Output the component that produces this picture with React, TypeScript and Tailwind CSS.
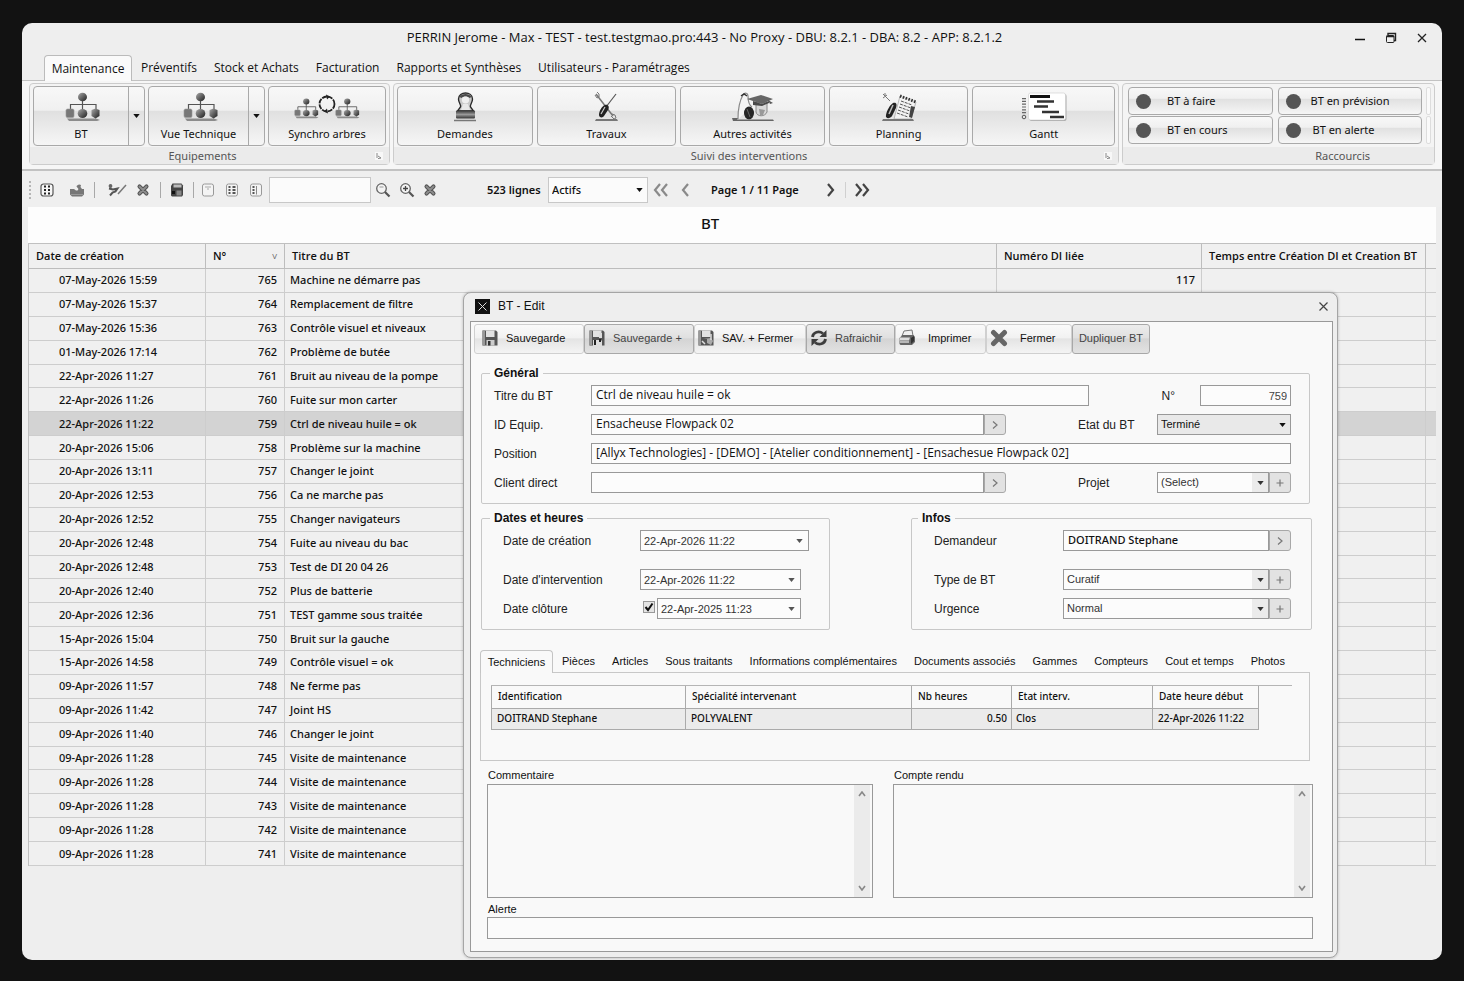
import React from "react";

type IconProps = { className?: string };

function Caret({ className = "" }: IconProps) {
  return (
    <svg viewBox="0 0 8 5" className={`h-[4px] w-[7px] ${className}`} aria-hidden="true">
      <path d="M0 0h8L4 5z" fill="currentColor" />
    </svg>
  );
}

function Launcher() {
  return (
    <svg viewBox="0 0 8 8" className="h-2 w-2 bg-[#f8f8f8]" aria-hidden="true">
      <path d="M2 1v5M3 4l3 2-3 .6" stroke="#888" fill="none" />
    </svg>
  );
}

function OrgShapes({ id }: { id: string }) {
  return (
    <>
      <defs>
        <linearGradient id={id} x1="0" y1="0" x2="1" y2="1">
          <stop offset="0" stopColor="#aaa" />
          <stop offset="1" stopColor="#1c1c1c" />
        </linearGradient>
      </defs>
      <path d="M2 26.500h29l4 1.500-3 1H4z" fill="#8c8c8c" />
      <path d="M17.500 8v11M5.500 17v-4.500h25.500V17" stroke="#555" strokeWidth="1.200" fill="none" />
      <ellipse cx="17.500" cy="5" rx="4.500" ry="4.300" fill={`url(#${id})`} />
      <rect x="1" y="17" width="8" height="8.500" rx="1.500" fill="#777" stroke="#999" strokeWidth=".6" />
      <ellipse cx="17.500" cy="21.500" rx="4.800" ry="4.500" fill={`url(#${id})`} />
      <path d="M26.500 18l4-1.500 4 1.500v6l-4 2.500-4-2.500z" fill={`url(#${id})`} />
    </>
  );
}

function OrgIcon({ id }: { id: string }) {
  return (
    <svg viewBox="0 0 36 30" className="ml-1 h-[30px] w-9" aria-hidden="true">
      <OrgShapes id={id} />
    </svg>
  );
}

function SyncIcon() {
  return (
    <svg viewBox="0 0 66 30" className="h-[30px] w-[66px]" aria-hidden="true">
      <g transform="translate(0 6) scale(.7)"><OrgShapes id="syncA" /></g>
      <g transform="translate(41 6) scale(.7)"><OrgShapes id="syncB" /></g>
      <circle cx="33" cy="12" r="7.500" fill="none" stroke="#222" strokeWidth="1.800" strokeDasharray="5 1" />
      <path d="M32 2.500l4 2-3 3zM34 21.500l-4-2 3-3z" fill="#222" />
    </svg>
  );
}

function StampIcon() {
  return (
    <svg viewBox="0 0 24 30" className="h-[30px] w-6" aria-hidden="true">
      <defs>
        <linearGradient id="stamp" x1="0" y1="0" x2="0" y2="1">
          <stop offset="0" stopColor="#333" />
          <stop offset=".5" stopColor="#999" />
          <stop offset="1" stopColor="#333" />
        </linearGradient>
      </defs>
      <path d="M5.500 7c0-8 14-8 14 0 0 4-3 6-2 8l3 4H4.500l3-4c1-2-2-4-2-8z" fill="#c9c9c9" stroke="#2b2b2b" strokeWidth="1.400" />
      <path d="M6.500 5c2-4 10-4 12 0l-2 1c-2-2-6-2-8 0z" fill="#4a4a4a" />
      <ellipse cx="12.500" cy="8" rx="3.600" ry="3.400" fill="#efefef" />
      <path d="M10 12h5l2 6H8z" fill="#e8e8e8" />
      <rect x="3" y="18.500" width="19" height="8" rx="1" fill="url(#stamp)" />
      <path d="M1 28.500h22" stroke="#777" strokeWidth="1.500" />
    </svg>
  );
}

function ToolsIcon() {
  return (
    <svg viewBox="0 0 24 30" className="h-[30px] w-6" aria-hidden="true">
      <path d="M2 2l17 22" stroke="#777" strokeWidth="1.500" />
      <path d="M1 3l2 3 2-1V2L3 0M18 22l3 1 1 3-2 1-3-3" fill="none" stroke="#777" />
      <path d="M22 2L12 15" stroke="#555" strokeWidth="1.200" />
      <path d="M11 13c3-1 5 2 3 5l-4 6c-1 2-5 2-5-1 0-4 3-9 6-10z" fill="#222" />
      <path d="M11 15l-4 7" stroke="#ccc" strokeWidth="1.200" />
      <path d="M2 27h21l1 2H1z" fill="#777" />
    </svg>
  );
}

function ActivityIcon() {
  return (
    <svg viewBox="0 0 42 30" className="h-[30px] w-[42px]" aria-hidden="true">
      <path d="M6 27c0-9 2-19 5-24 2-3 5-2 5 1 0 5 1 9 4 11" fill="#f4f4f4" stroke="#888" strokeWidth="1.200" />
      <path d="M9 4l3-2 3 2" stroke="#333" strokeWidth="1.500" fill="none" />
      <path d="M24 10v10c1 5 9 5 11 0V10z" fill="#d8d8d8" stroke="#888" />
      <path d="M15 7l14-4 12 4-11 5z" fill="#666" />
      <path d="M21 9v4l9 1 7-3V9l-7 3z" fill="#4a4a4a" />
      <path d="M36 8l5 3-3 1z" fill="#555" />
      <path d="M27 17l6 1-2 5h-3z" fill="#999" />
      <ellipse cx="17" cy="21" rx="5" ry="6.500" fill="#262626" />
      <path d="M15 17l3 8" stroke="#666" />
      <path d="M0 26h6l-1 1.500h36l1 1.500H1z" fill="#666" />
    </svg>
  );
}

function PlanningIcon() {
  return (
    <svg viewBox="0 0 36 30" className="h-[30px] w-9" aria-hidden="true">
      <path d="M19 4l16 6-5 17H13z" fill="#f2f2f2" stroke="#aaa" strokeWidth=".8" />
      <path d="M19 4l16 6" stroke="#333" strokeWidth="3" strokeDasharray="1.500 1.500" />
      <path d="M20 9l11 4M19 12l11 4M18 15l11 4M17 18l11 4M16 21l11 4" stroke="#555" strokeDasharray="3 1" />
      <path d="M30 14l4 1-3 11-3-1z" fill="#444" />
      <path d="M2 2l7 7M2 6l4-3M4 1v3" stroke="#777" />
      <path d="M12 11c4-1 4 2 3 5l-4 8c-2 3-7 3-6-1 1-5 4-10 7-12z" fill="#222" />
      <path d="M12 13l-4 9" stroke="#bbb" strokeWidth="1.500" />
      <path d="M2 27h30l1 2H1z" fill="#777" />
    </svg>
  );
}

function GanttIcon() {
  return (
    <svg viewBox="0 0 46 30" className="h-[30px] w-[46px]" aria-hidden="true">
      <path d="M3 6v16" stroke="#666" strokeWidth="4" strokeDasharray="1.200 1.600" />
      <circle cx="3" cy="25" r="1.800" fill="none" stroke="#555" />
      <rect x="8.500" y="2" width="37" height="27" rx="2" fill="#aaa" />
      <rect x="7.500" y="1" width="37" height="27" rx="2" fill="#fff" stroke="#ccc" strokeWidth=".6" />
      <path d="M9 4.500h20" stroke="#111" strokeWidth="3" />
      <path d="M16 9.500h17M13 14.500h14M21 20h17M29 25h14" stroke="#333" strokeWidth="2.400" />
    </svg>
  );
}

function GridIcon() {
  return (
    <svg viewBox="0 0 16 16" className="size-4" aria-hidden="true">
      <rect x="2" y="2" width="12" height="12" rx="2.500" fill="#f6f6f6" stroke="#555" strokeWidth="1.200" />
      <path d="M6 3.500v9.500M10 3.500v9.500" stroke="#222" strokeWidth="2" strokeDasharray="2 1.500" />
    </svg>
  );
}

function ShareIcon() {
  return (
    <svg viewBox="0 0 16 16" className="size-4" aria-hidden="true">
      <path d="M1 7h4l2 1.500h1.500L9.500 7 7.500 4.500C8 3 10 1.500 12 3l-.5 2 1.500 2h2v5.500L13 14.500H3L1 12.500z" fill="#777" />
      <path d="M2 12.500h12" stroke="#999" />
    </svg>
  );
}

function EditIcon() {
  return (
    <svg viewBox="0 0 20 16" className="h-4 w-5" aria-hidden="true">
      <circle cx="3.500" cy="4" r="1.900" fill="#666" />
      <path d="M2 6.500l4 1 4.500-1-2 3-3 1-2.500 3" fill="none" stroke="#555" strokeWidth="2" />
      <path d="M19 3l-8 9" stroke="#777" strokeWidth="1.500" />
    </svg>
  );
}

function CrossIcon({ className = "size-4" }: IconProps) {
  return (
    <svg viewBox="0 0 16 16" className={className} aria-hidden="true">
      <path d="M4 4l8 8M12 4l-8 8" stroke="#555" strokeWidth="4.600" strokeLinecap="round" />
      <path d="M4 4l8 8M12 4l-8 8" stroke="#8d8d8d" strokeWidth="2.200" strokeLinecap="round" />
    </svg>
  );
}

function SolidCrossIcon() {
  return (
    <svg viewBox="0 0 18 18" className="size-[18px]" aria-hidden="true">
      <path d="M3.500 3.500l11 11M14.500 3.500l-11 11" stroke="#666" strokeWidth="5" strokeLinecap="round" />
    </svg>
  );
}

function DiskIcon() {
  return (
    <svg viewBox="0 0 16 16" className="size-4" aria-hidden="true">
      <path d="M3.500 1.500h9L14 3.500v9.500l-1 1.500H3L2 13.500V4z" fill="#444" />
      <path d="M4.500 2.500h8v3h-8z" fill="#bbb" />
      <path d="M7.500 8.500h5v5h-5z" fill="#888" />
      <path d="M3 9h3v3H3z" fill="#111" />
    </svg>
  );
}

function ListIcon({ kind }: { kind: "empty" | "full" | "half" }) {
  return (
    <svg viewBox="0 0 16 16" className="size-4" aria-hidden="true">
      <rect x="2.500" y="2" width="11" height="12" rx="2" fill="#f4f4f4" stroke="#999" />
      {kind === "empty" && <path d="M5 5h6M7 7h2" stroke="#aaa" />}
      {kind !== "empty" && <path d="M5.500 4v8.500" stroke="#555" strokeWidth="2" strokeDasharray="2 1" />}
      {kind === "full" && <path d="M10 4v8.500" stroke="#555" strokeWidth="3" strokeDasharray="2 1" />}
      {kind === "half" && <path d="M8.500 4v8.500" stroke="#888" />}
    </svg>
  );
}

function LensIcon({ plus = false }: { plus?: boolean }) {
  return (
    <svg viewBox="0 0 16 16" className="size-4" aria-hidden="true">
      <circle cx="6.500" cy="6.500" r="4.800" fill="#f4f4f4" stroke="#666" strokeWidth="1.300" />
      <path d="M10 10l4.500 4.500" stroke="#555" strokeWidth="2.200" />
      {plus ? <path d="M4 6.500h5M6.500 4v5" stroke="#444" strokeWidth="1.300" /> : <path d="M4.500 5h4" stroke="#999" />}
    </svg>
  );
}

function Chevrons({ dir, double = false }: { dir: "left" | "right"; double?: boolean }) {
  const d = dir === "left" ? "M7 1L2 7l5 6" : "M1 1l5 6-5 6";
  return (
    <svg viewBox={double ? "0 0 15 14" : "0 0 8 14"} className={`h-[14px] ${double ? "w-[15px]" : "w-2"}`} aria-hidden="true">
      <path d={d} fill="none" stroke="currentColor" strokeWidth="2.200" />
      {double && <path d={d} transform="translate(7 0)" fill="none" stroke="currentColor" strokeWidth="2.200" />}
    </svg>
  );
}

function SaveIcon({ variant }: { variant: "plain" | "plus" | "close" }) {
  return (
    <svg viewBox="0 0 18 18" className="size-[18px]" aria-hidden="true">
      <path d="M1.500 1.500H15L16.500 3v13.500h-15z" fill="#555" />
      <path d="M1.500 1.500H4v15H1.500z" fill="#999" />
      <path d="M5 1.500h8.500v6.500H5z" fill="#e2e2e2" />
      {variant === "plain" && <path d="M5.500 11h8v5.500h-8z" fill="#ccc" />}
      {variant === "plain" && <path d="M7 12h2.500v4.500H7z" fill="#333" />}
      {variant === "plus" && <path d="M5 11h8l1 1v5H5zM11 4h3v5h-3z" fill="#ddd" />}
      {variant === "plus" && <path d="M7 11v5M12 10v3" stroke="#222" strokeWidth="2" />}
      {variant === "close" && <path d="M6 10h4v4l4 2 2-4-2-3" fill="#aaa" />}
      {variant === "close" && <path d="M5 12l3 3M14 5v6" stroke="#ddd" strokeWidth="1.500" />}
    </svg>
  );
}

function RefreshIcon() {
  return (
    <svg viewBox="0 0 18 18" className="size-[18px]" aria-hidden="true">
      <path d="M2.500 8C3 3 9 1.500 13 4.500M15.500 10c-.5 5-6.500 6.500-10.500 3.500" fill="none" stroke="#3d3d3d" strokeWidth="2.800" />
      <path d="M16.500 1v7h-7zM1.500 17v-7h7z" fill="#3d3d3d" />
    </svg>
  );
}

function PrinterIcon() {
  return (
    <svg viewBox="0 0 18 18" className="size-[18px]" aria-hidden="true">
      <path d="M6 2l8-1 1 6H4z" fill="#f0f0f0" stroke="#777" />
      <path d="M1.500 9l3-3h11l1.500 2v5l-3 3H2.500l-1-1z" fill="#666" />
      <path d="M2 8.500h10l-1 3H1.500z" fill="#ddd" />
      <path d="M2 13h9" stroke="#eee" strokeWidth="1.200" />
      <path d="M13 9l3-2v5l-3 3z" fill="#333" />
    </svg>
  );
}

const glossy =
  "border border-[#a9a9a9] rounded-[4px] bg-[linear-gradient(to_bottom,#f8f8f8_0%,#f0f0f0_40%,#e0e0e0_42%,#f6f6f6_100%)]";

function RibbonButton({ label, icon, split = false, className = "" }: { label: string; icon: React.ReactNode; split?: boolean; className?: string }) {
  return (
    <div className={`flex h-[60px] ${glossy} ${className}`}>
      <button type="button" className="flex min-w-0 flex-1 flex-col items-center gap-1 pt-[5px]">
        {icon}
        <span className="whitespace-nowrap leading-4">{label}</span>
      </button>
      {split && (
        <button type="button" aria-label={`Options ${label}`} className="grid w-4 place-items-center border-l border-[#a9a9a9]">
          <Caret className="h-[3px] w-[6px]" />
        </button>
      )}
    </div>
  );
}

function RibbonGroup({ title, className, launcher = true, labelClass = "text-center", children }: { title: string; className: string; launcher?: boolean; labelClass?: string; children: React.ReactNode }) {
  return (
    <section className={`flex h-[82px] flex-col rounded-[4px] border border-[#cccccc] bg-[#f4f4f4] ${className}`}>
      <div className="px-[3px] pt-[2px]">{children}</div>
      <div className="mt-auto flex h-[17px] items-center bg-[#ebebeb] pr-[6px]">
        <h2 className={`flex-1 leading-4 text-[#555] ${labelClass}`}>{title}</h2>
        {launcher && <Launcher />}
      </div>
    </section>
  );
}

function Shortcut({ label, pad }: { label: string; pad: string }) {
  return (
    <button type="button" className={`flex h-[28px] items-center pl-[7px] whitespace-nowrap ${glossy}`}>
      <span className="size-[15px] rounded-full bg-[#555]" />
      <span className={pad}>{label}</span>
    </button>
  );
}

const tabs = ["Préventifs", "Stock et Achats", "Facturation", "Rapports et Synthèses", "Utilisateurs - Paramétrages"];

const rows: [string, number, string, string?][] = [
  ["07-May-2026 15:59", 765, "Machine ne démarre pas", "117"],
  ["07-May-2026 15:37", 764, "Remplacement de filtre"],
  ["07-May-2026 15:36", 763, "Contrôle visuel et niveaux"],
  ["01-May-2026 17:14", 762, "Problème de butée"],
  ["22-Apr-2026 11:27", 761, "Bruit au niveau de la pompe"],
  ["22-Apr-2026 11:26", 760, "Fuite sur mon carter"],
  ["22-Apr-2026 11:22", 759, "Ctrl de niveau huile = ok"],
  ["20-Apr-2026 15:06", 758, "Problème sur la machine"],
  ["20-Apr-2026 13:11", 757, "Changer le joint"],
  ["20-Apr-2026 12:53", 756, "Ca ne marche pas"],
  ["20-Apr-2026 12:52", 755, "Changer navigateurs"],
  ["20-Apr-2026 12:48", 754, "Fuite au niveau du bac"],
  ["20-Apr-2026 12:48", 753, "Test de DI 20 04 26"],
  ["20-Apr-2026 12:40", 752, "Plus de batterie"],
  ["20-Apr-2026 12:36", 751, "TEST gamme sous traitée"],
  ["15-Apr-2026 15:04", 750, "Bruit sur la gauche"],
  ["15-Apr-2026 14:58", 749, "Contrôle visuel = ok"],
  ["09-Apr-2026 11:57", 748, "Ne ferme pas"],
  ["09-Apr-2026 11:42", 747, "Joint HS"],
  ["09-Apr-2026 11:40", 746, "Changer le joint"],
  ["09-Apr-2026 11:28", 745, "Visite de maintenance"],
  ["09-Apr-2026 11:28", 744, "Visite de maintenance"],
  ["09-Apr-2026 11:28", 743, "Visite de maintenance"],
  ["09-Apr-2026 11:28", 742, "Visite de maintenance"],
  ["09-Apr-2026 11:28", 741, "Visite de maintenance"],
];

function Separator() {
  return <span className="h-4 w-px bg-[#a8a8a8]" />;
}

function Toolbar() {
  return (
    <div className="flex h-9 items-center bg-[#efefef] pt-[2px] pl-[7px] text-[11px]">
      <span className="h-[18px] border-l-2 border-dotted border-[#b5b5b5]" />
      <button type="button" aria-label="Grille" className="ml-2"><GridIcon /></button>
      <button type="button" aria-label="Exporter" className="ml-[14px] mr-[9px]"><ShareIcon /></button>
      <Separator />
      <button type="button" aria-label="Modifier" className="ml-3"><EditIcon /></button>
      <button type="button" aria-label="Supprimer" className="ml-[9px] mr-[10px]"><CrossIcon className="size-[14px]" /></button>
      <Separator />
      <button type="button" aria-label="Enregistrer" className="ml-2 mr-2"><DiskIcon /></button>
      <Separator />
      <button type="button" aria-label="Vue vide" className="ml-[6px]"><ListIcon kind="empty" /></button>
      <button type="button" aria-label="Vue liste" className="ml-2"><ListIcon kind="full" /></button>
      <button type="button" aria-label="Vue partielle" className="ml-2"><ListIcon kind="half" /></button>
      <input aria-label="Recherche" className="ml-[5px] h-[26px] w-[102px] border border-[#c8c8c8] bg-[#fbfbfb] px-1" />
      <button type="button" aria-label="Rechercher" className="ml-1"><LensIcon /></button>
      <button type="button" aria-label="Zoomer" className="ml-2"><LensIcon plus /></button>
      <button type="button" aria-label="Effacer" className="ml-2"><CrossIcon className="size-[14px]" /></button>
      <span className="ml-[50px] w-[54px] font-semibold whitespace-nowrap">523 lignes</span>
      <SelectBox label="Filtre" value="Actifs" className="ml-[7px] h-[26px] w-[100px] border-[#c8c8c8] bg-[#fbfbfb] text-[11px] font-medium" />
      <button type="button" aria-label="Première page" className="ml-[5px] text-[#8a8a8a]"><Chevrons dir="left" double /></button>
      <button type="button" aria-label="Page précédente" className="ml-[13px] text-[#8a8a8a]"><Chevrons dir="left" /></button>
      <span className="ml-[22px] w-[93px] font-semibold whitespace-nowrap">Page 1 / 11 Page</span>
      <button type="button" aria-label="Page suivante" className="ml-[23px] mr-[10px] text-[#444]"><Chevrons dir="right" /></button>
      <span className="h-4 w-px bg-[#d0d0d0]" />
      <button type="button" aria-label="Dernière page" className="ml-[9px] text-[#444]"><Chevrons dir="right" double /></button>
    </div>
  );
}

function SelectBox({ id, label, value, className = "", button = false }: { id?: string; label?: string; value: string; className?: string; button?: boolean }) {
  return (
    <span className={`relative block border ${className}`}>
      <select id={id} aria-label={label} className="block h-full w-full appearance-none bg-transparent pl-[3px] outline-none">
        <option>{value}</option>
      </select>
      <span className={`pointer-events-none absolute inset-y-0 right-0 grid w-4 place-items-center ${button ? "bg-[#ebebeb]" : ""}`}>
        <Caret />
      </span>
    </span>
  );
}

const field = "h-[21px] border border-[#999] bg-[#fcfcfc]";
const textField = `${field} px-[4px] pb-[2px] font-['Open_Sans',sans-serif] text-[12px] outline-none`;

function MiniButton({ kind, label }: { kind: "go" | "add"; label: string }) {
  return (
    <button type="button" aria-label={label} className="grid h-[21px] w-[22px] shrink-0 place-items-center rounded-r-[3px] border border-[#a8a8a8] bg-[#e2e2e2]">
      <svg viewBox="0 0 10 10" className="size-[10px]" fill="none" stroke="#777" aria-hidden="true">
        <path d={kind === "go" ? "M3 1.500L7 5 3 8.500" : "M5 1.500v7M1.500 5h7"} strokeWidth="1.200" />
      </svg>
    </button>
  );
}

function Label({ htmlFor, className = "", children }: { htmlFor: string; className?: string; children: React.ReactNode }) {
  return <label htmlFor={htmlFor} className={`shrink-0 text-[12px] leading-4 text-[#222] ${className}`}>{children}</label>;
}

function Group({ title, className, children }: { title: string; className: string; children: React.ReactNode }) {
  return (
    <fieldset className={`min-w-0 rounded-[2px] border border-[#c8c8c8] pt-1 ${className}`}>
      <legend className="px-1 text-[12px] leading-4 font-bold">{title}</legend>
      {children}
    </fieldset>
  );
}

function DateField({ id, value, className }: { id: string; value: string; className: string }) {
  return (
    <span className={`relative block ${field} ${className}`}>
      <input id={id} defaultValue={value} className="block h-full w-full bg-transparent pl-[3px] text-[11px] text-[#333] outline-none" />
      <Caret className="absolute top-[8px] right-[5px] text-[#555]" />
    </span>
  );
}

function MemoBox({ id, label, className }: { id: string; label: string; className: string }) {
  return (
    <div className={`flex flex-col ${className}`}>
      <label htmlFor={id} className="pl-px text-[11px] leading-4">{label}</label>
      <div className="mt-px flex h-[114px] border border-[#999] bg-[#f9f9f9]">
        <textarea id={id} className="min-w-0 flex-1 resize-none bg-transparent p-1 text-[11px] outline-none" />
        <div className="mr-[2px] flex w-4 flex-col items-center justify-between bg-[#ebebeb] py-[6px] text-[#888]">
          <svg viewBox="0 0 8 6" className="h-[6px] w-2" fill="none" stroke="currentColor" strokeWidth="1.600" aria-hidden="true"><path d="M1 5l3-4 3 4" /></svg>
          <svg viewBox="0 0 8 6" className="h-[6px] w-2" fill="none" stroke="currentColor" strokeWidth="1.600" aria-hidden="true"><path d="M1 1l3 4 3-4" /></svg>
        </div>
      </div>
    </div>
  );
}

const raised = "border-[#d0d0d0] bg-[linear-gradient(to_bottom,#fafafa_0%,#f2f2f2_45%,#e4e4e4_50%,#f4f4f4_100%)] text-[#111]";
const grey = "border-[#a8a8a8] bg-[linear-gradient(to_bottom,#ececec_0%,#e0e0e0_45%,#d4d4d4_50%,#e2e2e2_100%)] text-[#444]";

const actions: { label: string; icon?: React.ReactNode; tone: string; box: string; text: string }[] = [
  { label: "Sauvegarde", icon: <SaveIcon variant="plain" />, tone: raised, box: "w-[110px] pl-[6px]", text: "ml-[7px]" },
  { label: "Sauvegarde +", icon: <SaveIcon variant="plus" />, tone: grey, box: "w-[110px] pl-[3px]", text: "ml-[7px]" },
  { label: "SAV. + Fermer", icon: <SaveIcon variant="close" />, tone: raised, box: "w-[112px] pl-[2px]", text: "ml-[7px]" },
  { label: "Rafraichir", icon: <RefreshIcon />, tone: grey, box: "w-[89px] pl-[3px]", text: "ml-[7px]" },
  { label: "Imprimer", icon: <PrinterIcon />, tone: raised, box: "w-[91px] pl-[2px]", text: "ml-3" },
  { label: "Fermer", icon: <SolidCrossIcon />, tone: raised, box: "w-[86px] pl-[3px]", text: "ml-3" },
  { label: "Dupliquer BT", tone: grey, box: "w-[78px]", text: "" },
];

const detailTabs = ["Pièces", "Articles", "Sous traitants", "Informations complémentaires", "Documents associés", "Gammes", "Compteurs", "Cout et temps", "Photos"];

function EditDialog() {
  return (
    <div role="dialog" aria-labelledby="dlg-title" className="absolute top-[292px] left-[463px] flex w-[875px] flex-col rounded-[8px] border border-[#a5a5a5] bg-[#eeeeee] pr-1 pb-[5px] pl-[6px] font-['Liberation_Sans',Arial,sans-serif] shadow-[0_0_3px_rgba(0,0,0,0.25)]">
      <header className="flex h-7 items-center pr-[5px] pb-[2px] pl-[5px]">
        <svg viewBox="0 0 15 15" className="size-[15px]" aria-hidden="true">
          <rect width="15" height="15" fill="#111" />
          <path d="M3.500 3.500l8 8M11.500 3.500l-8 8" stroke="#ddd" />
        </svg>
        <h2 id="dlg-title" className="ml-2 text-[12px] leading-4">BT - Edit</h2>
        <button type="button" aria-label="Fermer la fenêtre" className="ml-auto">
          <svg viewBox="0 0 9 9" className="size-[9px]" aria-hidden="true"><path d="M.5.5l8 8M8.500.5l-8 8" stroke="#444" strokeWidth="1.200" /></svg>
        </button>
      </header>
      <form className="flex flex-col border border-[#999] bg-[#f9f9f9] pb-3">
        <div className="flex pt-[2px] pl-[3px]">
          {actions.map((a) => (
            <button key={a.label} type="button" className={`flex h-[30px] items-center rounded-[3px] border pb-[2px] ${a.icon ? "" : "justify-center"} ${a.tone} ${a.box}`}>
              {a.icon}
              <span className={`text-[11px] whitespace-nowrap ${a.text}`}>{a.label}</span>
            </button>
          ))}
        </div>

        <Group title="Général" className="mt-[11px] mr-[22px] ml-[10px] pr-[18px] pb-[10px] pl-2">
          <div className="flex flex-col gap-2 pl-1">
            <div className="flex items-center">
              <Label htmlFor="titre" className="w-[97px]">Titre du BT</Label>
              <input id="titre" defaultValue="Ctrl de niveau huile = ok" className={`w-[498px] ${textField}`} />
              <Label htmlFor="numero" className="mr-[25px] ml-auto">N°</Label>
              <input id="numero" defaultValue="759" className={`w-[91px] px-[3px] text-right text-[11px] text-[#444] outline-none ${field}`} />
            </div>
            <div className="flex items-center">
              <Label htmlFor="equip" className="w-[97px]">ID Equip.</Label>
              <input id="equip" defaultValue="Ensacheuse Flowpack 02" className={`w-[393px] ${textField}`} />
              <MiniButton kind="go" label="Ouvrir équipement" />
              <Label htmlFor="etat" className="ml-auto w-[79px]">Etat du BT</Label>
              <SelectBox id="etat" value="Terminé" className="h-[21px] w-[134px] border-[#999] bg-[#e9e9e9] text-[11px]" />
            </div>
            <div className="flex items-center">
              <Label htmlFor="position" className="w-[97px]">Position</Label>
              <input id="position" defaultValue="[Allyx Technologies] - [DEMO] - [Atelier conditionnement] - [Ensachesue Flowpack 02]" className={`min-w-0 flex-1 ${textField}`} />
            </div>
            <div className="flex items-center">
              <Label htmlFor="client" className="w-[97px]">Client direct</Label>
              <input id="client" className={`w-[393px] ${textField}`} />
              <MiniButton kind="go" label="Ouvrir client" />
              <Label htmlFor="projet" className="ml-auto w-[79px]">Projet</Label>
              <SelectBox id="projet" value="(Select)" button className="h-[21px] w-[112px] border-[#999] bg-[#fcfcfc] text-[11px] text-[#333]" />
              <MiniButton kind="add" label="Ajouter projet" />
            </div>
          </div>
        </Group>

        <div className="mt-[6px] mr-[20px] ml-[10px] flex justify-between">
          <Group title="Dates et heures" className="w-[349px] pb-[10px] pl-2">
            <div className="flex items-center pl-[13px]">
              <Label htmlFor="creation" className="w-[137px]">Date de création</Label>
              <DateField id="creation" value="22-Apr-2026 11:22" className="w-[169px]" />
            </div>
            <div className="mt-[18px] flex items-center pl-[13px]">
              <Label htmlFor="intervention" className="w-[137px]">Date d'intervention</Label>
              <DateField id="intervention" value="22-Apr-2026 11:22" className="w-[161px]" />
            </div>
            <div className="mt-2 flex items-center pl-[13px]">
              <Label htmlFor="cloture" className="w-[140px]">Date clôture</Label>
              <span className="relative mr-[2px] mb-1 block size-3">
                <input type="checkbox" defaultChecked aria-label="Clôturé" className="block size-3 appearance-none border border-[#999] bg-[#e4e4e4]" />
                <svg viewBox="0 0 12 12" className="pointer-events-none absolute inset-0 size-3" aria-hidden="true"><path d="M2.500 6l2.500 3 4.500-6.500" fill="none" stroke="#111" strokeWidth="2" /></svg>
              </span>
              <DateField id="cloture" value="22-Apr-2025 11:23" className="w-[144px]" />
            </div>
          </Group>
          <Group title="Infos" className="w-[401px] pb-[10px] pl-[6px]">
            <div className="flex items-center pl-4">
              <Label htmlFor="demandeur" className="w-[129px]">Demandeur</Label>
              <input id="demandeur" defaultValue="DOITRAND Stephane" className={`w-[206px] px-[4px] pb-[2px] font-['Noto_Sans',sans-serif] text-[11px] font-medium outline-none ${field}`} />
              <MiniButton kind="go" label="Ouvrir demandeur" />
            </div>
            <div className="mt-[18px] flex items-center pl-4">
              <Label htmlFor="type" className="w-[129px]">Type de BT</Label>
              <SelectBox id="type" value="Curatif" button className="h-[21px] w-[206px] border-[#999] bg-[#fcfcfc] text-[11px] text-[#333]" />
              <MiniButton kind="add" label="Ajouter type" />
            </div>
            <div className="mt-2 flex items-center pl-4">
              <Label htmlFor="urgence" className="w-[129px]">Urgence</Label>
              <SelectBox id="urgence" value="Normal" button className="h-[21px] w-[206px] border-[#999] bg-[#fcfcfc] text-[11px] text-[#333]" />
              <MiniButton kind="add" label="Ajouter urgence" />
            </div>
          </Group>
        </div>

        <div role="tablist" className="mt-5 mr-[22px] ml-[9px] flex h-[22px] text-[11px] whitespace-nowrap">
          <button type="button" role="tab" aria-selected="true" className="z-10 -mb-px w-[73px] rounded-t-[4px] border border-b-0 border-[#c4c4c4] bg-[#f9f9f9]">Techniciens</button>
          <div className="flex flex-1 justify-between pr-[25px] pl-[9px]">
            {detailTabs.map((t) => (
              <button key={t} type="button" role="tab" aria-selected="false">{t}</button>
            ))}
          </div>
        </div>
        <div className="mr-[22px] ml-[9px] h-[89px] border border-[#c8c8c8] pt-3 pr-[17px] pl-[10px]">
          <div className="border-t border-[#b5b5b5]">
            <table className="h-[43px] w-[767px] table-fixed border-collapse font-['Noto_Sans',sans-serif] text-[10px] font-medium">
              <colgroup>
                <col className="w-[194px]" /><col className="w-[226px]" /><col className="w-[100px]" /><col className="w-[141px]" /><col className="w-[106px]" />
              </colgroup>
              <thead>
                <tr className="h-[22px] text-left">
                  {["Identification", "Spécialité intervenant", "Nb heures", "Etat interv.", "Date heure début"].map((h) => (
                    <th key={h} className="border border-t-0 border-[#aaa] px-[6px] font-medium">{h}</th>
                  ))}
                </tr>
              </thead>
              <tbody>
                <tr className="h-[21px] bg-[#ebebeb]">
                  <td className="border border-[#aaa] px-[5px]">DOITRAND Stephane</td>
                  <td className="border border-[#aaa] px-[5px]">POLYVALENT</td>
                  <td className="border border-[#aaa] px-[4px] text-right">0.50</td>
                  <td className="border border-[#aaa] px-[4px]">Clos</td>
                  <td className="border border-[#aaa] px-[5px] whitespace-nowrap">22-Apr-2026 11:22</td>
                </tr>
              </tbody>
            </table>
          </div>
        </div>

        <div className="mt-[6px] mr-[19px] ml-4 flex justify-between">
          <MemoBox id="commentaire" label="Commentaire" className="w-[386px]" />
          <MemoBox id="compte" label="Compte rendu" className="w-[420px]" />
        </div>
        <div className="mt-[3px] mr-[19px] ml-4 flex flex-col">
          <label htmlFor="alerte" className="pl-px text-[11px] leading-4">Alerte</label>
          <input id="alerte" className="h-[22px] border border-[#999] bg-[#fbfbfb] px-1 text-[11px]" />
        </div>
      </form>
    </div>
  );
}

export default function App() {
  const cell = "border-r border-b border-[#cdcdcd]";
  return (
    <div className="relative flex min-h-screen flex-col bg-[#121212] px-[22px] pt-[23px] pb-[21px] font-['Noto_Sans',sans-serif] text-[11px] text-[#111]">
      <div className="flex flex-1 flex-col overflow-hidden rounded-[10px] bg-[#eeeeee]">
        <header className="flex h-8 items-center pr-[15px] pb-[2px] pl-[32px]">
          <h1 className="flex-1 text-center font-['Open_Sans',sans-serif] text-[13px] whitespace-nowrap">PERRIN Jerome - Max - TEST - test.testgmao.pro:443 - No Proxy - DBU: 8.2.1 - DBA: 8.2 - APP: 8.2.1.2</h1>
          <div className="flex w-[72px] items-center justify-between">
            <button type="button" aria-label="Réduire"><svg viewBox="0 0 10 10" className="size-[10px]" aria-hidden="true"><path d="M0 6.500h10" stroke="#111" strokeWidth="1.500" /></svg></button>
            <button type="button" aria-label="Restaurer"><svg viewBox="0 0 12 12" className="size-3" fill="none" stroke="#222" aria-hidden="true"><rect x="1.500" y="3.500" width="7.500" height="7" rx="1" /><path d="M1.500 4.500H9M3 3V1.500h7.500v7H9" strokeWidth="1.400" /></svg></button>
            <button type="button" aria-label="Quitter"><svg viewBox="0 0 10 10" className="size-[10px]" aria-hidden="true"><path d="M1 1l8 8M9 1l-8 8" stroke="#222" strokeWidth="1.300" /></svg></button>
          </div>
        </header>

        <nav className="flex h-[25px] items-stretch pl-[22px] font-['Open_Sans',sans-serif] text-[12px] whitespace-nowrap">
          <button type="button" className="z-10 -mb-px w-[88px] rounded-t-[4px] border border-b-0 border-[#bbb] bg-[#fafafa]">Maintenance</button>
          {tabs.map((t, i) => (
            <button key={t} type="button" className={i === 0 ? "ml-[9px]" : "ml-[17px]"}>{t}</button>
          ))}
        </nav>

        <div className="flex gap-[3px] border-t border-b-2 border-[#c2c2c2] bg-[#f6f6f6] px-[7px] pt-[2px] pb-1">
          <RibbonGroup title="Equipements" className="w-[361px] shrink-0">
            <div className="flex gap-[3px]">
              <RibbonButton label="BT" split icon={<OrgIcon id="orgA" />} className="w-[112px]" />
              <RibbonButton label="Vue Technique" split icon={<OrgIcon id="orgB" />} className="w-[117px]" />
              <RibbonButton label="Synchro arbres" icon={<SyncIcon />} className="flex-1" />
            </div>
          </RibbonGroup>
          <RibbonGroup title="Suivi des interventions" className="min-w-0 flex-1">
            <div className="grid grid-cols-[136fr_140fr_145fr_140fr_143fr] gap-1">
              <RibbonButton label="Demandes" icon={<StampIcon />} />
              <RibbonButton label="Travaux" icon={<ToolsIcon />} />
              <RibbonButton label="Autres activités" icon={<ActivityIcon />} />
              <RibbonButton label="Planning" icon={<PlanningIcon />} />
              <RibbonButton label="Gantt" icon={<GanttIcon />} />
            </div>
          </RibbonGroup>
          <RibbonGroup title="Raccourcis" launcher={false} className="w-[313px] shrink-0" labelClass="pr-[58px] text-right">
            <div className="flex gap-1 pt-px pl-[2px]">
              <div className="grid flex-1 grid-cols-2 gap-x-[5px] gap-y-px">
                <Shortcut label="BT à faire" pad="ml-4" />
                <Shortcut label="BT en prévision" pad="ml-[10px]" />
                <Shortcut label="BT en cours" pad="ml-4" />
                <Shortcut label="BT en alerte" pad="ml-3" />
              </div>
              <div className="flex w-[5px] flex-col gap-px">
                <span className="h-[28px] rounded-[2px] border border-[#ddd] bg-[#fafafa]" />
                <span className="h-[28px] rounded-[2px] border border-[#ddd] bg-[#fafafa]" />
              </div>
            </div>
          </RibbonGroup>
        </div>

        <Toolbar />

        <div className="flex flex-1 flex-col px-[6px]">
          <h2 className="flex h-9 items-center justify-center bg-[#fdfdfd] pr-11 pb-1 text-[15px] font-medium">BT</h2>
          <table className="h-[623px] w-full table-fixed border-separate border-spacing-0 border-t border-l border-[#c0c0c0] bg-[#f0f0f0]">
            <colgroup>
              <col className="w-[177px]" /><col className="w-[79px]" /><col /><col className="w-[205px]" /><col className="w-[224px]" /><col className="w-[10px]" />
            </colgroup>
            <thead>
              <tr className="h-[25px] text-left font-['Open_Sans',sans-serif] [&>th]:border-b [&>th]:border-[#bdbdbd] [&>th]:px-[7px] [&>th]:font-semibold [&>th]:whitespace-nowrap">
                <th className="border-r">Date de création</th>
                <th className="border-r">
                  <span className="flex items-center justify-between">N°<span className="text-[8px] font-normal text-[#666]">V</span></span>
                </th>
                <th className="border-r">Titre du BT</th>
                <th className="border-r">Numéro DI liée</th>
                <th className="border-r">Temps entre Création DI et Creation BT</th>
                <th />
              </tr>
            </thead>
            <tbody className="leading-4 font-medium">
              {rows.map(([date, num, title, di]) => (
                <tr key={num} className={num === 759 ? "bg-[#d3d3d3]" : ""}>
                  <td className={`${cell} pl-[30px]`}>{date}</td>
                  <td className={`${cell} pr-[7px] text-right`}>{num}</td>
                  <td className={`${cell} pl-[5px]`}>{title}</td>
                  <td className={`${cell} pr-[6px] text-right`}>{di}</td>
                  <td className={cell} />
                  <td className="border-b border-[#cdcdcd]" />
                </tr>
              ))}
            </tbody>
          </table>
        </div>
      </div>
      <EditDialog />
    </div>
  );
}
